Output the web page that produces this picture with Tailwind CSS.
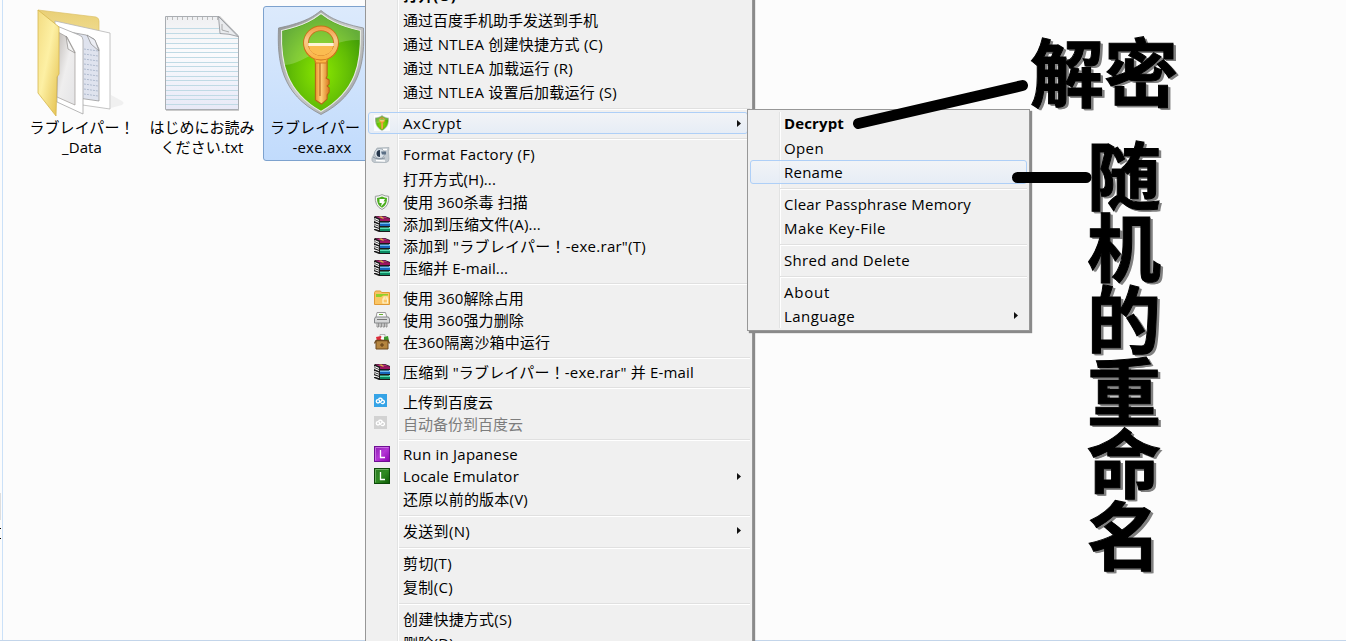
<!DOCTYPE html>
<html lang="zh-CN">
<head>
<meta charset="utf-8">
<title>AxCrypt</title>
<script src="https://cdn.jsdelivr.net/npm/@tailwindcss/browser@4"></script>
</head>
<body class="bg-[#fcfcfc]">
<svg class="absolute size-0">
  <defs>
    <linearGradient id="fold" x1="0" x2="1" y1="0" y2="1"><stop offset="0" stop-color="#f3dc82"/><stop offset=".45" stop-color="#fdf0a4"/><stop offset="1" stop-color="#e3bf4c"/></linearGradient>
    <linearGradient id="foldback" x1="0" x2="0" y1="0" y2="1"><stop offset="0" stop-color="#e9cf76"/><stop offset="1" stop-color="#f6e9a8"/></linearGradient>
    <linearGradient id="pg" x1="0" x2="1" y1="0" y2="1"><stop offset="0" stop-color="#bdb8b4"/><stop offset=".5" stop-color="#efeeee"/><stop offset="1" stop-color="#e4e4e6"/></linearGradient>
    <linearGradient id="note" x1="0" x2="0" y1="0" y2="1"><stop offset="0" stop-color="#eff0f2"/><stop offset=".4" stop-color="#fbfbfd"/><stop offset="1" stop-color="#e7e9f7"/></linearGradient>
    <radialGradient id="green" cx=".5" cy=".6" r=".6"><stop offset="0" stop-color="#8be800"/><stop offset=".6" stop-color="#62bd05"/><stop offset="1" stop-color="#3f9a08"/></radialGradient>
    <linearGradient id="rim" x1="0" x2="1" y1="0" y2="1"><stop offset="0" stop-color="#8d8f8f"/><stop offset=".5" stop-color="#c9cbcb"/><stop offset="1" stop-color="#9a9c9e"/></linearGradient>
    <linearGradient id="gold" x1="0" x2="1" y1="0" y2="0"><stop offset="0" stop-color="#e8902a"/><stop offset=".4" stop-color="#ffd27a"/><stop offset="1" stop-color="#d9781c"/></linearGradient>
    <linearGradient id="bow" x1="0" x2="0" y1="0" y2="1"><stop offset="0" stop-color="#f3a04a"/><stop offset=".4" stop-color="#f8c98c"/><stop offset="1" stop-color="#fbb445"/></linearGradient>
    <linearGradient id="pur" x1="0" x2="1" y1="0" y2="1"><stop offset="0" stop-color="#8a1fb0"/><stop offset=".5" stop-color="#b436d6"/><stop offset="1" stop-color="#8b00b0"/></linearGradient>
    <linearGradient id="grn" x1="0" x2="1" y1="0" y2="1"><stop offset="0" stop-color="#2c7a24"/><stop offset=".5" stop-color="#2f8a22"/><stop offset="1" stop-color="#0d5a05"/></linearGradient>
    <symbol id="rar" viewBox="0 0 16 16">
      <path d="M1 0h10l5 2v4h-1v1h1v4h-1v1h1v4H5l-5-2v-1h1v-1L0 11V9l1-1-1-1V5l1-1-1-1V1z" fill="#1a1a1a"/>
      <path d="M1 .6h9.500L15.500 2.500H6z" fill="#c02a80"/><path d="M6 2.500h10V5H6z" fill="#9c1560"/><path d="M5 .6h2.500l2.800 1.900H8z" fill="#e0c040"/>
      <path d="M6 6.500h10V8H6z" fill="#6cbcf0"/><path d="M6 8h10v2H6z" fill="#1766bb"/>
      <path d="M6 11.500h10V13H6z" fill="#55dcb0"/><path d="M6 13h10v2H6z" fill="#0b8a62"/>
      <path d="M.5 2.500l4.500 2M.5 4.500l4.500 2M.5 7.500l4.500 1.700M.5 9.500l4.500 1.700M.5 12l4.500 1.600" stroke="#fff" stroke-width="1.100"/>
    </symbol>
    <symbol id="cloud" viewBox="0 0 13 13"><rect width="13" height="13" fill="currentColor"/><g fill="none" stroke="#fff" stroke-width="1.400"><circle cx="4" cy="7.300" r="1.700"/><path d="M4.500 4.700A2.300 2.300 0 0 1 8.300 6L5.800 8.800M8.300 6.200a1.700 1.700 0 1 1-1 2.600"/></g></symbol>
    <symbol id="key" viewBox="0 0 86 107">
      <path d="M43 1.500C37 6 30 13 1.500 19 0 52 4 85 43 105.500 82 85 86 52 84.500 19 56 13 49 6 43 1.500z" fill="url(#rim)" stroke="#8b8d8f" stroke-width=".8"/>
      <path d="M43 4.500C36 10 28 16 4.500 21.500 3.500 53 8 82 43 102.500 78 82 82.500 53 81.500 21.500 58 16 50 10 43 4.500z" fill="url(#green)" stroke="#e6eae2" stroke-width="1.200"/>
      <path d="M43 5.500C36 11 28 17 5.500 22.300 5 35 5.500 46 8 56 30 54 48 30 80.500 31V22C58 17 50 11 43 5.500z" fill="#fff" opacity=".2"/>
      <path d="M37.500 50h11.500v17l-1 2 3 2v4l-2 2 2 2v4l-2 3v4l-5.500 5-6-4z" fill="url(#gold)" stroke="#b5631a" stroke-width="1"/><path d="M42 53v34" stroke="#b86a20" stroke-width="1.200"/>
      <path d="M26.500 36a16.500 16.500 0 0 0 10 14l1.500 4h10l1.500-4a16.500 16.500 0 0 0 10-14z" fill="#fbb445" stroke="#d27a22" stroke-width="1"/>
      <circle cx="43" cy="34" r="14.700" fill="none" stroke="#c8701a" stroke-width="5.600"/><circle cx="43" cy="34" r="14.700" fill="none" stroke="url(#bow)" stroke-width="3.800"/>
      <path d="M31 36.500h24q-1 9-12 10-11-1-12-10z" fill="#fbbc50"/><path d="M30.500 35.500h25" stroke="#fff3d8" stroke-width="3"/>
    </symbol>
    <symbol id="arrow" viewBox="0 0 4 7"><path d="M0 0l4 3.500-4 3.500z" fill="#111"/></symbol>
  </defs>
</svg>

<main class="relative h-[641px] w-[1346px] overflow-hidden bg-[#fcfcfc] font-['Open_Sans','Noto_Sans_CJK_SC',sans-serif] text-[15px] text-black">
  <!-- window edges -->
  <div class="absolute inset-y-0 left-[2px] w-px bg-[#cbe1f8]"></div>
  <div class="absolute inset-x-0 bottom-0 h-px bg-[#c3d5ea]"></div>
  <div class="absolute left-0 top-[493px] h-[27px] w-px bg-[#dedede]"></div>
  <div class="absolute left-0 top-[528px] h-[11px] w-px border-y border-black"></div>

  <!-- files -->
  <section lang="ja" class="absolute left-[22px] top-[6px] flex font-['Open_Sans','Noto_Sans_CJK_JP',sans-serif] leading-[20px]">
    <div class="flex w-[120px] flex-col items-center">
      <svg class="h-[111px] w-[94px]" viewBox="35 6 94 111">
        <path d="M111 108l11-3q3-2 0-4l-11-6z" fill="#f0f0f0"/>
        <path d="M38 10l58 7q3 1 3 4v40H60z" fill="url(#foldback)" stroke="#dcc268" stroke-width=".7"/>
        <path d="M55 21l55 12v76l-55-8z" fill="#fff" stroke="#b5b5b5" stroke-width=".8"/>
        <path d="M64 31l22 4 8 4 5 10v52l-35-5z" fill="#dfe3ee" stroke="#9a9a9a" stroke-width=".8"/>
        <path d="M84 49l14 2M84 54l14 2M84 59l14 2M84 64l14 2M84 69l14 2M84 74l14 2M84 79l14 2M84 84l14 2M84 89l14 2M84 94l14 2" stroke="#a9b6ca" stroke-width=".9" stroke-dasharray="2 1"/>
        <path d="M87 35l4 9 8 7-4-11z" fill="#eceef4" stroke="#888" stroke-width=".7"/>
        <path d="M57 26l22 9q4 1 4 5v74l-26-12z" fill="#fff" stroke="#a5a5a5" stroke-width=".8"/>
        <path d="M58 32l9 5 8 15v53l-18-8z" fill="url(#pg)" stroke="#9e9a96" stroke-width=".7"/>
        <path d="M66 36l2 13 7 4z" fill="#f4f4f4" stroke="#8d8986" stroke-width=".7"/>
        <path d="M38 10l21 17v47l-2 3-1 39-18-23z" fill="url(#fold)" stroke="#d6b64e" stroke-width=".8"/>
      </svg>
      <div class="flex flex-col items-center"><span class="whitespace-pre" data-w="105">ラブレイパー！</span><span class="whitespace-pre" data-w="40">_Data</span></div>
    </div>
    <div class="flex w-[120px] flex-col items-center">
      <svg class="h-[111px] w-[80px]" viewBox="162 6 80 111">
        <path d="M166 16h54l19 20v75h-73z" fill="#aaa" opacity=".6"/>
        <path d="M165.500 16.500h53l20 19.500v73.500h-73z" fill="url(#note)" stroke="#a9adb2"/>
        <path d="M166 28.500h53M166 33.500h55M166 38.500h72M166 43.500h72M166 48.500h72M166 52.500h72M166 57.500h72M166 62.500h72M166 66.500h72M166 71.500h72M166 76.500h72M166 80.500h72M166 85.500h72M166 90.500h72M166 95.500h72M166 99.500h72M166 104.500h72" stroke="#c0dae5" stroke-width="1"/>
        <path d="M167 18.500h52" stroke="#bbb" stroke-width="3" stroke-dasharray="1 4"/>
        <path d="M218.500 16.500l1.500 17q9 0 18 3z" fill="#e9ebee" stroke="#8e9196" stroke-width=".8"/><path d="M222 24v6l7 2" stroke="#999" fill="none" stroke-width=".8"/>
      </svg>
      <div class="flex flex-col items-center"><span class="whitespace-pre" data-w="105">はじめにお読み</span><span class="whitespace-pre" data-w="83">ください.txt</span></div>
    </div>
    <div class="ml-[1px] flex h-[155px] w-[118px] flex-col items-center rounded-[3px] border border-[#7da2ce] bg-linear-to-b from-[#dceafc] to-[#c1dbfc]">
      <svg class="mr-[2px] mt-[2px] h-[107px] w-[88px]" viewBox="0 0 86 107" preserveAspectRatio="none"><use href="#key"/></svg>
      <div class="mt-px flex flex-col"><span class="whitespace-pre pl-px" data-w="105">ラブレイパー！</span><span class="self-center whitespace-pre" data-w="59">-exe.axx</span></div>
    </div>
  </section>

  <!-- context menu -->
  <nav class="absolute left-[365px] top-[-19px] h-[680px] w-[388px] border border-[#979797] bg-[#f0f0f0] px-[2px] pt-[2px] shadow-[2px_2px_1px_#8a8a8a]">
    <div class="pointer-events-none absolute inset-y-0 left-[31px] w-[2px] border-l border-[#e2e3e3] bg-white"></div>
    <div class="relative flex flex-col whitespace-pre">
      <div class="flex h-6 items-center pb-px pl-[35px] font-bold"><span data-w="53">打开(O)</span></div>
      <div class="flex h-6 items-center pl-[35px]"><span data-w="195">通过百度手机助手发送到手机</span></div>
      <div class="flex h-[25px] items-center pb-px pl-[35px]"><span data-w="200">通过 NTLEA 创建快捷方式 (C)</span></div>
      <div class="flex h-6 items-center pb-[2px] pl-[35px]"><span data-w="170">通过 NTLEA 加载运行 (R)</span></div>
      <div class="flex h-6 items-center pb-[2px] pl-[35px]"><span data-w="214">通过 NTLEA 设置后加载运行 (S)</span></div>
      <div class="h-[7px] pl-[31px] pt-[3px]"><div class="h-[2px] border-t border-[#e0e0e0] bg-white"></div></div>
      <div class="flex h-[22px] w-[380px] items-center rounded-[3px] border border-[#aecff7] bg-linear-to-b from-[#f2f5f9]/70 to-[#e4ecf7]/80 pl-[5px]">
        <div class="w-[29px]"><div class="flex size-4 items-center justify-center bg-white/80"><svg class="h-4 w-[14px]" viewBox="0 0 86 107" preserveAspectRatio="none"><use href="#key"/></svg></div></div>
        <span class="flex-1"><span data-w="59">AxCrypt</span></span><svg class="mr-[6px] h-[7px] w-1"><use href="#arrow"/></svg>
      </div>
      <div class="h-[9px] pl-[31px] pt-[4px]"><div class="h-[2px] border-t border-[#e0e0e0] bg-white"></div></div>
      <div class="flex h-6 items-center pl-[3px]"><div class="w-8"><svg class="size-[19px]" viewBox="0 0 19 19"><path d="M6 2l12-.5-.5 4L18 13q0 3-3 3.500H3q-3-1-2-4.500z" fill="#c3cad0" stroke="#a4adb5" stroke-width=".7"/><circle cx="8.500" cy="7.500" r="5" fill="#dbe3ea" stroke="#9aa3ab" stroke-width=".8"/><path d="M9 4a3.500 3.500 0 0 0 0 7z" fill="#26364a"/><path d="M10 5.500h5v3h-4z" fill="#5c7086"/><path d="M12 3.500h4M5 14.500l9 .5" stroke="#fff" stroke-width="1.600"/><path d="M2 11q4 3 12 1" stroke="#8793a0" fill="none"/></svg></div><span class="pb-px" data-w="132">Format Factory (F)</span></div>
      <div class="flex h-6 items-center pl-[35px] pt-px"><span data-w="93">打开方式(H)...</span></div>
      <div class="flex h-[22px] items-center pl-[6px]"><div class="w-[29px]"><svg class="size-4" viewBox="0 0 16 16"><path d="M8 .6q3 1.600 6.700 1.700Q15.500 12 8 15.500.5 12 1.300 2.300 5 2.200 8 .6z" fill="#f4f6f4" stroke="#989d99"/><path d="M8 2.500q2.500 1.200 5 1.400Q13.300 11 8 13.800 2.700 11 3 3.900q2.500-.2 5-1.400z" fill="#4cae1f"/><path d="M5.500 5H11L9.500 7.500h2L7 12.500l.8-3.500H5.500z" fill="#fff"/></svg></div><span data-w="125">使用 360杀毒 扫描</span></div>
      <div class="flex h-[22px] items-center pl-[6px]"><div class="w-[29px]"><svg class="size-4"><use href="#rar"/></svg></div><span data-w="138">添加到压缩文件(A)...</span></div>
      <div class="flex h-[22px] items-center pl-[6px]"><div class="w-[29px]"><svg class="size-4"><use href="#rar"/></svg></div><span data-w="243">添加到 "<span lang="ja" class="font-['Noto_Sans_CJK_JP',sans-serif] leading-none">ラブレイパー！</span>-exe.rar"(T)</span></div>
      <div class="flex h-[22px] items-center pl-[6px]"><div class="w-[29px]"><svg class="size-4"><use href="#rar"/></svg></div><span data-w="105">压缩并 E-mail...</span></div>
      <div class="h-2 pl-[31px] pt-1"><div class="h-[2px] border-t border-[#e0e0e0] bg-white"></div></div>
      <div class="flex h-[22px] items-center pl-[6px]"><div class="w-[29px]"><svg class="size-4" viewBox="0 0 16 16"><path d="M.5 2.500l1-1.500h5l1 1.500h8v12H.5z" fill="#f9c266" stroke="#e09a34"/><path d="M2 4h12v4H2z" fill="#8fd12a"/><path d="M1 7h6l2-1.500h6V14H1z" fill="#fbc665"/><path d="M9 9h4.500v4H9zM10 9V7h3v2" fill="none" stroke="#fff3cf" stroke-width="1.200"/></svg></div><span data-w="121">使用 360解除占用</span></div>
      <div class="flex h-[22px] items-center pl-[6px]"><div class="w-[29px]"><svg class="size-4" viewBox="0 0 16 16"><path d="M3 .5h8.500l1.500 5H2z" fill="#fafafa" stroke="#999"/><path d="M5 2.500h4" stroke="#68b030"/><path d="M1.500 5h13l1 2v4H.5V7z" fill="#d6d7d8" stroke="#86898b"/><path d="M3 7.500h10" stroke="#777"/><path d="M3 11v4h1.500v-4M6 11v4h1.500v-4M9 11v4h1.500v-4M12 11v4h1v-4" fill="none" stroke="#888" stroke-width=".9"/></svg></div><span data-w="121">使用 360强力删除</span></div>
      <div class="flex h-[22px] items-center pl-[6px]"><div class="w-[29px]"><svg class="size-4" viewBox="0 0 16 16"><path d="M6 .5h5v6H6z" fill="#f5f5f5" stroke="#999" stroke-width=".7"/><path d="M2 3l5-1 2 5H3z" fill="#dd2b3a"/><path d="M10 3l4-1 1 5h-5z" fill="#3a9a2c"/><circle cx="8" cy="4.500" r="1.300" fill="#fff"/><path d="M2 6.500h12V15H2z" fill="#b5853f" stroke="#6e481c"/><path d="M2 6.500L.5 9.500M14 6.500l1.500 3M2 6.500h12" stroke="#6e481c" stroke-width="1.400"/><path d="M8 9v4M6 11h4" stroke="#5e3b14"/></svg></div><span data-w="147">在360隔离沙箱中运行</span></div>
      <div class="h-2 pl-[31px] pt-1"><div class="h-[2px] border-t border-[#e0e0e0] bg-white"></div></div>
      <div class="flex h-[22px] items-center pl-[6px]"><div class="w-[29px]"><svg class="size-4"><use href="#rar"/></svg></div><span data-w="291">压缩到 "<span lang="ja" class="font-['Noto_Sans_CJK_JP',sans-serif] leading-none">ラブレイパー！</span>-exe.rar" 并 E-mail</span></div>
      <div class="h-2 pl-[31px] pt-1"><div class="h-[2px] border-t border-[#e0e0e0] bg-white"></div></div>
      <div class="flex h-[22px] items-center pl-[6px]"><div class="w-[29px]"><svg class="mb-[3px] size-[13px] text-[#35a3e6]"><use href="#cloud"/></svg></div><span data-w="90">上传到百度云</span></div>
      <div class="flex h-[22px] items-center pl-[6px] text-[#7d7d7d]"><div class="w-[29px]"><svg class="mb-[3px] size-[13px] text-[#d2d2d2]"><use href="#cloud"/></svg></div><span data-w="120">自动备份到百度云</span></div>
      <div class="h-2 pl-[31px] pt-1"><div class="h-[2px] border-t border-[#e0e0e0] bg-white"></div></div>
      <div class="flex h-[22px] items-center pl-[6px]"><div class="w-[29px]"><svg class="size-4" viewBox="0 0 16 16"><rect x=".5" y=".5" width="15" height="15" fill="url(#pur)" stroke="#6f0f93"/><path d="M1.500 14.500v-13h13" fill="none" stroke="#d27ce8" stroke-width=".8"/><path d="M6.500 4v7.500H11" fill="none" stroke="#fff" stroke-width="1.300"/></svg></div><span data-w="115">Run in Japanese</span></div>
      <div class="flex h-[22px] items-center pl-[6px]"><div class="w-[29px]"><svg class="size-4" viewBox="0 0 16 16"><rect x=".5" y=".5" width="15" height="15" fill="url(#grn)" stroke="#0c4a08"/><path d="M1.500 14.500v-13h13" fill="none" stroke="#77b96b" stroke-width=".8"/><path d="M6.500 4v7.500H11" fill="none" stroke="#fff" stroke-width="1.300"/></svg></div><span class="flex-1"><span data-w="116">Locale Emulator</span></span><svg class="mr-[9px] h-[7px] w-1"><use href="#arrow"/></svg></div>
      <div class="flex h-6 items-center pl-[35px]"><span data-w="125">还原以前的版本(V)</span></div>
      <div class="h-2 pl-[31px] pt-1"><div class="h-[2px] border-t border-[#e0e0e0] bg-white"></div></div>
      <div class="flex h-6 items-center pl-[35px]"><span class="flex-1"><span data-w="67">发送到(N)</span></span><svg class="mb-px mr-[9px] h-[7px] w-1"><use href="#arrow"/></svg></div>
      <div class="h-2 pl-[31px] pt-1"><div class="h-[2px] border-t border-[#e0e0e0] bg-white"></div></div>
      <div class="flex h-6 items-center pl-[35px]"><span data-w="49">剪切(T)</span></div>
      <div class="flex h-6 items-center pl-[35px]"><span data-w="50">复制(C)</span></div>
      <div class="h-2 pl-[31px] pt-1"><div class="h-[2px] border-t border-[#e0e0e0] bg-white"></div></div>
      <div class="flex h-6 items-center pl-[35px]"><span data-w="109">创建快捷方式(S)</span></div>
      <div class="flex h-6 items-center pl-[35px]"><span data-w="51">删除(D)</span></div>
    </div>
  </nav>

  <!-- AxCrypt submenu -->
  <nav class="absolute left-[747px] top-[109px] h-[222px] w-[283px] border border-[#979797] bg-[#f0f0f0] p-[2px] shadow-[2px_2px_1px_#8a8a8a]">
    <div class="absolute inset-y-[2px] left-[31px] w-[2px] border-l border-[#e2e3e3] bg-white"></div>
    <div class="relative flex flex-col whitespace-pre">
      <div class="flex h-6 items-center pb-px pl-[34px] font-bold"><span data-w="60">Decrypt</span></div>
      <div class="flex h-6 items-center pl-[34px]"><span data-w="40">Open</span></div>
      <div class="flex h-6 items-center rounded-[3px] border border-[#aecff7] bg-linear-to-b from-[#f2f5f9]/70 to-[#e4ecf7]/80 pl-[33px]"><span data-w="59">Rename</span></div>
      <div class="h-2 pl-[30px] pt-1"><div class="h-[2px] border-t border-[#e0e0e0] bg-white"></div></div>
      <div class="flex h-6 items-center pl-[34px]"><span data-w="187">Clear Passphrase Memory</span></div>
      <div class="flex h-6 items-center pl-[34px]"><span data-w="102">Make Key-File</span></div>
      <div class="h-2 pl-[30px] pt-1"><div class="h-[2px] border-t border-[#e0e0e0] bg-white"></div></div>
      <div class="flex h-6 items-center pl-[34px]"><span data-w="126">Shred and Delete</span></div>
      <div class="h-2 pl-[30px] pt-1"><div class="h-[2px] border-t border-[#e0e0e0] bg-white"></div></div>
      <div class="flex h-6 items-center pl-[34px]"><span data-w="46">About</span></div>
      <div class="flex h-6 items-center pl-[34px]"><span class="flex-1"><span data-w="71">Language</span></span><svg class="mb-px mr-[9px] h-[7px] w-1"><use href="#arrow"/></svg></div>
    </div>
  </nav>

  <!-- annotations -->
  <svg class="absolute inset-0 h-[641px] w-[1346px]" fill="none" stroke="#000" stroke-width="11" stroke-linecap="round"><path d="M858.500 123.500L1022.500 85.500M1017.500 177.500H1086"/></svg>
  <div class="absolute left-[1030px] top-[32px] whitespace-nowrap font-['Noto_Sans_CJK_SC',sans-serif] text-[74px] font-bold leading-[74px] [-webkit-text-stroke:1px_#000] [text-shadow:1px_1px_#808080,2px_2px_#808080,3px_2px_#808080]">解密</div>
  <div class="absolute left-[1087px] top-[136px] flex w-[74px] flex-col items-center font-['Noto_Sans_CJK_SC',sans-serif] text-[74px] font-bold leading-[72px] [-webkit-text-stroke:1px_#000] [text-shadow:1px_1px_#808080,2px_2px_#808080,3px_2px_#808080]"><span>随</span><span>机</span><span>的</span><span>重</span><span>命</span><span>名</span></div>
</main>
<script>
  // Spread each label over its nominal width.
  function fit() {
    document.querySelectorAll('[data-w]').forEach(function (el) {
      el.style.letterSpacing = '0px';
      var range = document.createRange();
      range.selectNodeContents(el);
      var w = range.getBoundingClientRect().width;
      el.style.letterSpacing = ((+el.dataset.w - w) / el.textContent.length).toFixed(3) + 'px';
    });
  }
  fit();
  window.addEventListener('load', fit);
  document.fonts.ready.then(fit);
  setTimeout(fit, 60);
</script>
</body>
</html>
